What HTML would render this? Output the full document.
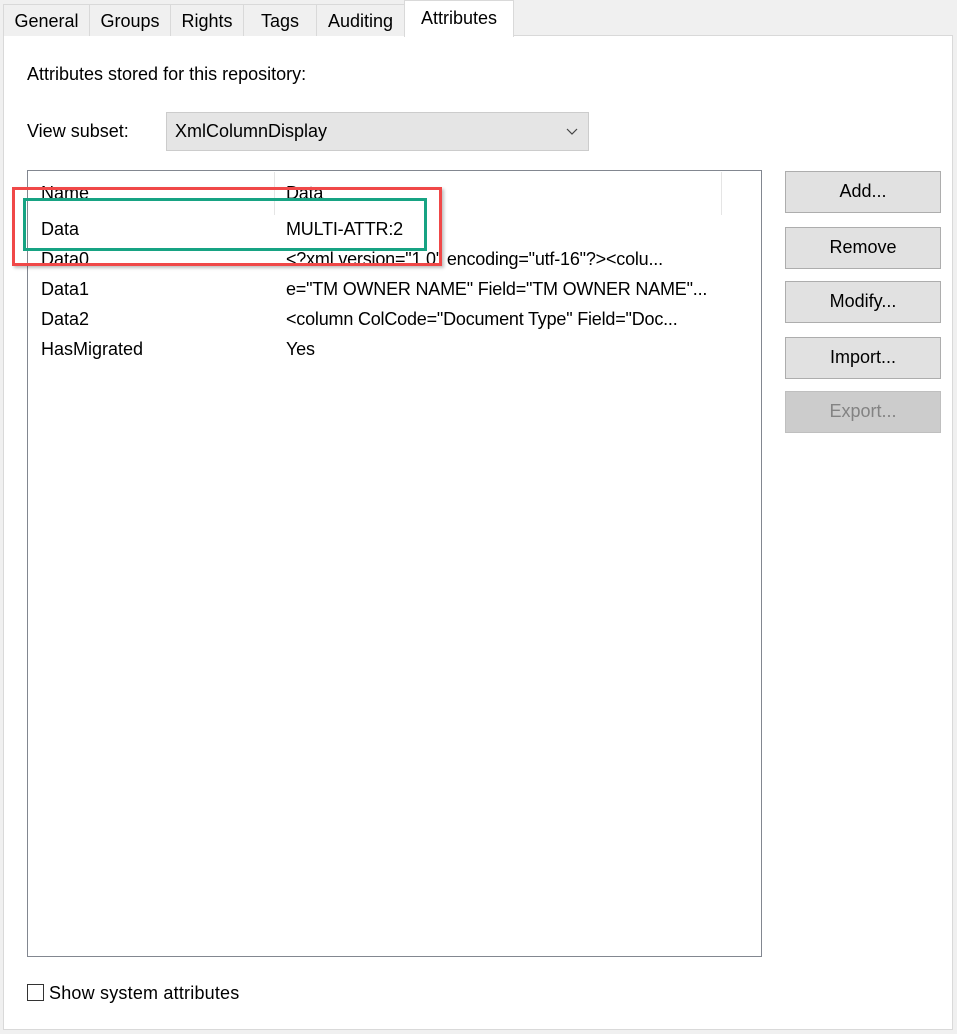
<!DOCTYPE html>
<html><head><style>
body{margin:0;width:957px;height:1034px;background:#f0f0f0;position:relative;overflow:hidden;font-family:"Liberation Sans",sans-serif;font-size:18px;color:#000}
.a{position:absolute}
.tab{position:absolute;top:4px;height:32px;border:1px solid #d9d9d9;border-bottom:none;background:#f0f0f0;box-sizing:border-box;text-align:center;line-height:32px}
.btn{position:absolute;left:785px;width:156px;height:42px;background:#e1e1e1;border:1px solid #adadad;box-sizing:border-box;text-align:center;line-height:38px}
.row{position:absolute;left:41px}
.c2{position:absolute;left:286px;white-space:nowrap;letter-spacing:-0.2px}
</style></head><body>
<div class="a" style="left:3px;top:35px;width:950px;height:995px;background:#fff;border:1px solid #d9d9d9;box-sizing:border-box"></div>
<div class="tab" style="left:3px;width:87px">General</div>
<div class="tab" style="left:89px;width:82px">Groups</div>
<div class="tab" style="left:170px;width:74px">Rights</div>
<div class="tab" style="left:243px;width:74px">Tags</div>
<div class="tab" style="left:316px;width:89px">Auditing</div>
<div class="tab" style="left:404px;top:0;width:110px;height:37px;background:#fff;line-height:34px;border-color:#d9d9d9">Attributes</div>
<div class="a" style="left:27px;top:64px">Attributes stored for this repository:</div>
<div class="a" style="left:27px;top:121px">View subset:</div>
<div class="a" style="left:166px;top:112px;width:423px;height:39px;background:#e5e5e5;border:1px solid #cccccc;box-sizing:border-box"><span class="a" style="left:8px;top:8px">XmlColumnDisplay</span><svg class="a" style="left:399px;top:15px" width="12" height="8"><path d="M1 1L6 6L11 1" fill="none" stroke="#444" stroke-width="1.2"/></svg></div>
<div class="a" style="left:27px;top:170px;width:735px;height:787px;border:1px solid #828790;box-sizing:border-box;background:#fff"></div>
<div class="a" style="left:274px;top:172px;width:1px;height:43px;background:#e5e5e5"></div>
<div class="a" style="left:721px;top:172px;width:1px;height:43px;background:#e5e5e5"></div>
<div class="row" style="top:183px">Name</div><div class="c2" style="top:183px">Data</div>
<div class="row" style="top:219px">Data</div><div class="c2" style="top:219px">MULTI-ATTR:2</div>
<div class="row" style="top:249px">Data0</div><div class="c2" style="top:249px">&lt;?xml version="1.0" encoding="utf-16"?&gt;&lt;colu...</div>
<div class="row" style="top:279px">Data1</div><div class="c2" style="top:279px">e="TM OWNER NAME" Field="TM OWNER NAME"...</div>
<div class="row" style="top:309px">Data2</div><div class="c2" style="top:309px">&lt;column ColCode="Document Type" Field="Doc...</div>
<div class="row" style="top:339px">HasMigrated</div><div class="c2" style="top:339px">Yes</div>
<div class="a" style="left:12px;top:187px;width:430px;height:79px;border:3px solid #f04848;box-sizing:border-box;box-shadow:2px 2px 3px rgba(0,0,0,.25)"></div>
<div class="a" style="left:23px;top:198px;width:404px;height:53px;border:3px solid #17a383;box-sizing:border-box"></div>
<div class="btn" style="top:171px">Add...</div>
<div class="btn" style="top:227px">Remove</div>
<div class="btn" style="top:281px">Modify...</div>
<div class="btn" style="top:337px">Import...</div>
<div class="btn" style="top:391px;background:#cccccc;border-color:#bfbfbf;color:#838383">Export...</div>
<div class="a" style="left:27px;top:984px;width:17px;height:17px;border:1px solid #333;box-sizing:border-box;background:#fff"></div>
<div class="a" style="left:49px;top:983px;letter-spacing:0.2px">Show system attributes</div>
</body></html>
